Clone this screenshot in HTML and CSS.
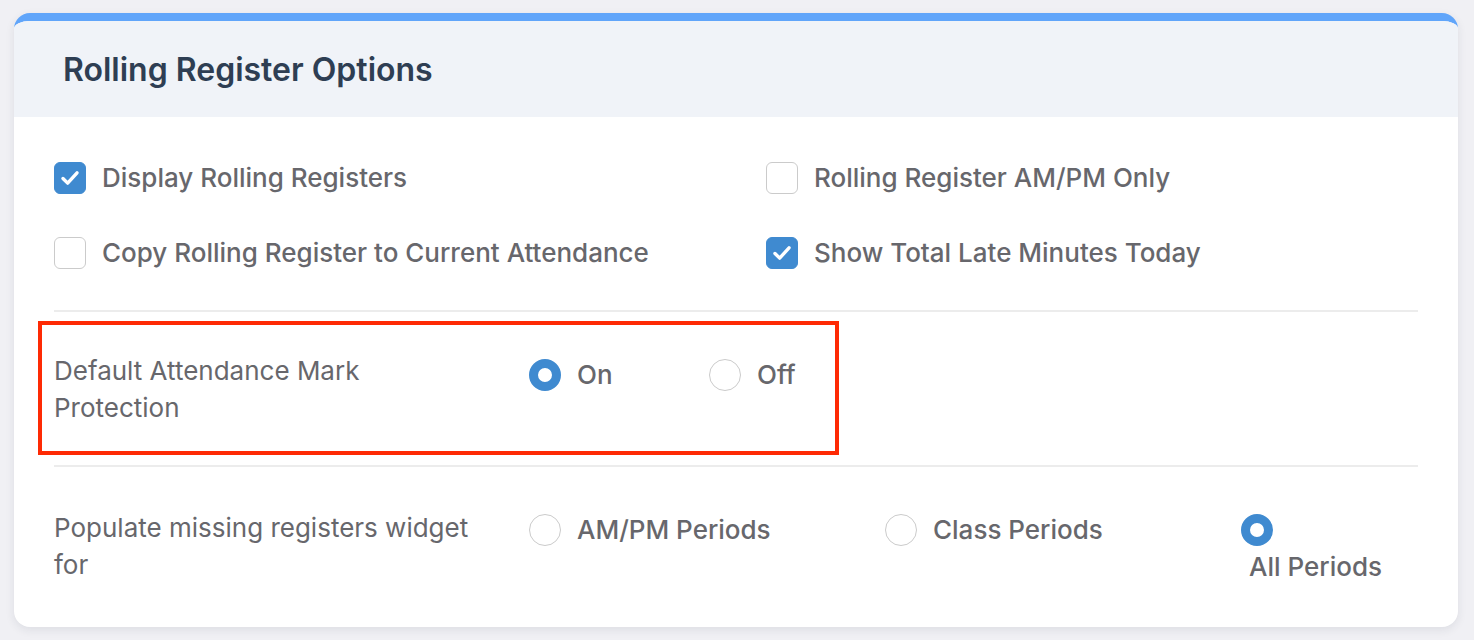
FILE: index.html
```html
<!DOCTYPE html>
<html lang="en">

<head>
    <meta charset="UTF-8">
    <meta name="viewport" content="width=device-width, initial-scale=1.0">
    <title>Rolling Register Options</title>
    <link rel="stylesheet" href="styles.css">
</head>

<body>
    <div class="card">
        <div class="card-header">
            <h2>Rolling Register Options</h2>
        </div>
        <div class="card-body">
            <div class="checks">
                <label class="check">
                    <span class="box on">
                        <svg viewBox="0 0 32 32"><polyline points="8.5,16.5 13.5,21.5 23.5,10.5"></polyline></svg>
                    </span>
                    Display Rolling Registers
                </label>
                <label class="check">
                    <span class="box"></span>
                    Rolling Register AM/PM Only
                </label>
                <label class="check">
                    <span class="box"></span>
                    Copy Rolling Register to Current Attendance
                </label>
                <label class="check">
                    <span class="box on">
                        <svg viewBox="0 0 32 32"><polyline points="8.5,16.5 13.5,21.5 23.5,10.5"></polyline></svg>
                    </span>
                    Show Total Late Minutes Today
                </label>
            </div>

            <hr class="divider">

            <div class="setting highlight">
                <div class="setting-label">Default Attendance Mark Protection</div>
                <div class="options two">
                    <label class="option"><span class="radio on"></span><span class="text">On</span></label>
                    <label class="option"><span class="radio"></span><span class="text">Off</span></label>
                </div>
            </div>

            <hr class="divider">

            <div class="setting last">
                <div class="setting-label">Populate missing registers widget for</div>
                <div class="options three">
                    <label class="option"><span class="radio"></span><span class="text">AM/PM Periods</span></label>
                    <label class="option"><span class="radio"></span><span class="text">Class Periods</span></label>
                    <label class="option"><span class="radio on"></span><span class="text">All Periods</span></label>
                </div>
            </div>
        </div>
    </div>
</body>

</html>
```

FILE: styles.css
```css
* {
    padding: 0;
    margin: 0;
    box-sizing: border-box;
}

html,
body {
    width: 100%;
    height: 100%;
    background-color: #f0f0f4;
    font-family: Inter, "Noto Sans", sans-serif;
    overflow: hidden;
}

body {
    padding: 13px 16px 0 14px;
}

.card {
    background: #fff;
    border-top: 8px solid #60a5fa;
    border-radius: 16px;
    box-shadow: 0 3px 10px rgba(30, 40, 70, 0.09);
    overflow: hidden;
}

.card-header {
    height: 96px;
    background: #f0f3f8;
    display: flex;
    align-items: center;
    padding-left: 49px;
}

.card-header h2 {
    font-size: 32px;
    font-weight: 600;
    color: #2e3e53;
}

.card-body {
    padding: 42px 40px 42px;
    color: #67676c;
    font-size: 26px;
    line-height: 37px;
}

/* checkbox grid */
.checks {
    display: grid;
    grid-template-columns: 1fr 1fr;
    column-gap: 60px;
    row-gap: 38px;
    font-weight: 500;
}

.check {
    display: flex;
    align-items: center;
    gap: 16px;
}

.box {
    width: 32px;
    height: 32px;
    flex: none;
    border: 1.5px solid #cbcbcb;
    border-radius: 6px;
    display: flex;
    align-items: center;
    justify-content: center;
}

.box.on {
    background: #3f8ad0;
    border-color: #3f8ad0;
}

.box svg {
    width: 32px;
    height: 32px;
}

.box polyline {
    fill: none;
    stroke: #fff;
    stroke-width: 3.6;
    stroke-linecap: round;
    stroke-linejoin: round;
}

.divider {
    border: 0;
    border-top: 2px solid #ececec;
    margin-top: 39px;
}

/* label + radio rows */
.setting {
    display: grid;
    grid-template-columns: 475px 1fr;
    align-items: start;
}

.setting-label {
    width: 424px;
}

.highlight {
    width: 801px;
    margin: 9px 0 0 -16px;
    border: 4px solid #fe2a04;
    padding: 27px 12px 25px 12px;
}

.highlight .options {
    padding-top: 2px;
}

.highlight + .divider {
    margin-top: 10px;
}

.last {
    margin-top: 42px;
}

.options {
    display: grid;
    font-weight: 500;
}

.options.two {
    grid-template-columns: 180px auto;
}

.options.three {
    grid-template-columns: 356px 356px 170px;
}

.radio {
    display: inline-block;
    width: 32px;
    height: 32px;
    border-radius: 50%;
    border: 1.5px solid #cbcbcb;
    vertical-align: middle;
    margin-right: 8px;
}

.radio.on {
    border: 9.5px solid #3f8ad0;
}

.option .text {
    display: inline-block;
    margin-left: 8px;
    vertical-align: middle;
}
```
